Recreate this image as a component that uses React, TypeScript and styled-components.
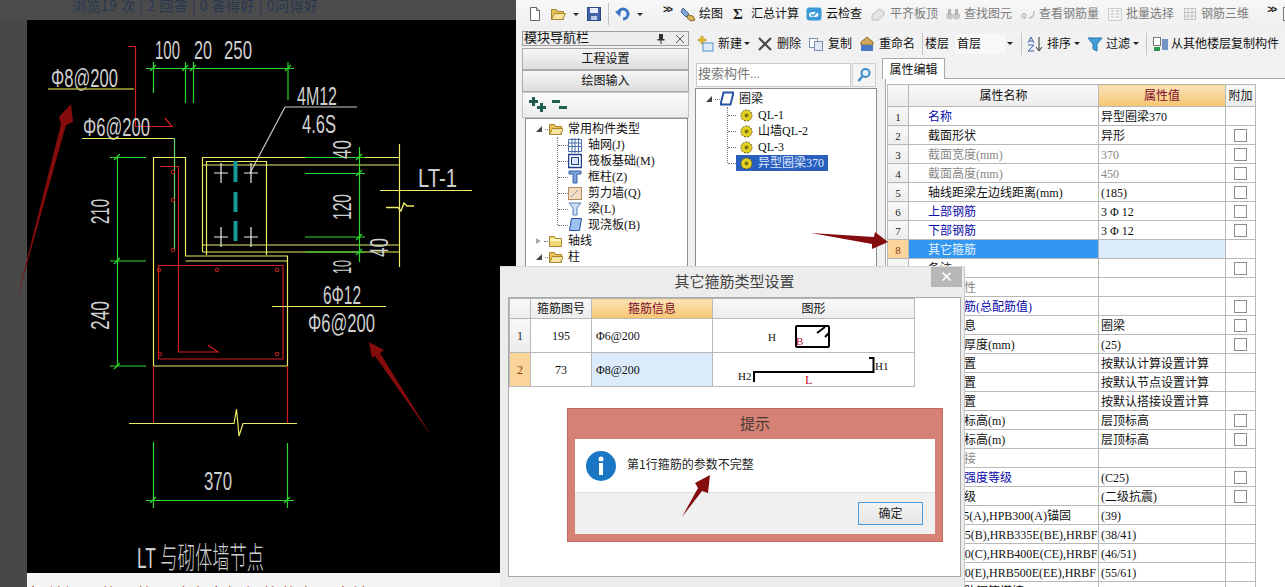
import React from "react";
import styled, { createGlobalStyle } from "styled-components";

const UI = `"Liberation Serif", "Noto Sans CJK SC", serif`;

const Global = createGlobalStyle`
  html, body { margin: 0; padding: 0; width: 1285px; height: 587px; overflow: hidden; background: #f1f1f1; }
  #root { width: 1285px; height: 587px; }
  * { box-sizing: border-box; }
`;

const Page = styled.div`
  position: relative; display: flex; width: 1285px; height: 587px; overflow: hidden;
  font: 12px/16px ${UI}; color: #111;
`;

/* left: web page with the CAD picture */
const WebColumn = styled.div`
  width: 516px; flex: none; padding-left: 27px; background: #484848;
  display: flex; flex-direction: column; overflow: hidden;
`;
const StatsStrip = styled.div`
  height: 20px; margin-left: -27px; padding: 0 0 0 72px; background: #4b4b4b; overflow: hidden;
  font: 14px/10px "Noto Sans CJK SC", sans-serif; letter-spacing: .5px; color: #26384f; white-space: nowrap;
`;
const Drawing = styled.svg`display: block; flex: none; background: #000;`;
const WhiteBand = styled.div`flex: 1; background: #f4f4f4; overflow: hidden; position: relative;`;
const Clipped = styled.div`
  margin: 12px 0 0 2px; font: 16px/16px "Noto Sans CJK SC", sans-serif; letter-spacing: 2px; color: #9c2a20; white-space: nowrap;
`;

/* right: application */
const AppColumn = styled.div`
  flex: 1; min-width: 0; background: #f1f1f1; display: flex; flex-direction: column;
`;
const TopBar = styled.div`
  height: 28px; flex: none; display: flex; align-items: center; white-space: nowrap; overflow: hidden;
  background: linear-gradient(#f7f7f7, #efefef);
`;
const Tool = styled.div<{ $ml?: number; $gap?: number; $dim?: boolean }>`
  display: flex; align-items: center; flex: none;
  margin-left: ${p => p.$ml ?? 8}px; gap: ${p => p.$gap ?? 3}px;
  color: ${p => (p.$dim ? "#7c7c7c" : "#111")};
`;
const Sep = styled.div<{ $ml?: number; $h?: number }>`
  width: 1px; height: ${p => p.$h ?? 22}px; flex: none; background: #c4c4c4; margin-left: ${p => p.$ml ?? 6}px;
`;
const Caret = styled.div<{ $ml?: number }>`
  flex: none; width: 0; height: 0; margin-left: ${p => p.$ml ?? 3}px;
  border-left: 3px solid transparent; border-right: 3px solid transparent; border-top: 3px solid #222;
`;
const More = styled.div<{ $ml?: number }>`
  flex: none; width: 9px; margin-left: ${p => p.$ml ?? 18}px; margin-top: -7px; font: bold 10px/10px "Liberation Mono", monospace; letter-spacing: -2px; color: #222;
`;
const Sigma = styled.div`
  width: 11px; font: bold 15px/16px "Liberation Serif", serif; color: #222;
`;
const EdgeBox = styled.div`
  width: 8px; height: 14px; margin-left: 7px; flex: none; background: #fff; border: 1px solid #777;
`;

const Body = styled.div`flex: 1; min-height: 0; display: flex; padding-left: 6px;`;

const NavColumn = styled.div`
  width: 167px; flex: none; padding-top: 3px; display: flex; flex-direction: column;
`;
const NavHeader = styled.div`
  height: 15px; flex: none; margin-bottom: 2px; padding: 0 0 2px 1px; display: flex; align-items: center; justify-content: space-between;
  border: 1px solid #9d9d9d; background: #ececec; font-size: 13px; line-height: 13px;
`;
const HeaderIcons = styled.div`display: flex; align-items: center; gap: 10px; padding-right: 3px; margin-top: 2px;`;
const NavButton = styled.div`
  height: 22px; flex: none; display: flex; align-items: center; justify-content: center;
  border: 1px solid #a8a8a8; background: linear-gradient(#f6f6f6, #dedede);
`;
const ExpandBar = styled.div`
  height: 26px; flex: none; padding-left: 6px; display: flex; align-items: center; gap: 4px;
  background: linear-gradient(#fafafa, #ececec); border: 1px solid #c4c4c4;
`;
const TreePanel = styled.div`
  flex: 1; min-height: 0; overflow: hidden; background: #fff; border: 1px solid #8d8d8d;
  padding-top: 2px;
`;
const NavTree = styled(TreePanel)`margin: 0 1px 0 3px; padding-left: 10px;`;
const Row = styled.div`height: 16px; display: flex; align-items: center; white-space: nowrap;`;
const Expander = styled.div<{ $open?: boolean }>`
  width: 6px; height: 6px; flex: none; margin-right: 3px;
  ${p => p.$open
    ? `border-style: solid; border-width: 0 0 6px 6px; border-color: transparent transparent #444 transparent; width:0; height:0;`
    : `border-style: solid; border-width: 3px 0 3px 5px; border-color: transparent transparent transparent #aaa; width:0; height:0;`}
`;
const NavChildren = styled.div`margin-left: 21px; border-left: 1px dotted #777; margin-bottom: 8px; height: 88px;`;
const Dash = styled.div<{ $w: number }>`width: ${p => p.$w}px; flex: none; border-top: 1px dotted #777;`;
const RowLabel = styled.span<{ $ml?: number }>`margin-left: ${p => p.$ml ?? 5}px;`;

const Main = styled.div`flex: 1; min-width: 0; margin-left: 6px; display: flex; flex-direction: column;`;
const SecondBar = styled.div`
  height: 30px; flex: none; padding-top: 1px; display: flex; align-items: center; white-space: nowrap;
`;
const FloorSelect = styled.div`
  width: 50px; height: 20px; margin-left: 6px; padding-left: 2px; flex: none; display: flex; align-items: center; background: #f8f8f8;
`;
const Panes = styled.div`flex: 1; min-height: 0; display: flex; gap: 5px;`;
const ComponentPane = styled.div`width: 182px; flex: none; padding-top: 5px; display: flex; flex-direction: column;`;
const SearchRow = styled.div`height: 25px; flex: none; display: flex; gap: 1px; padding: 0 0 1px 1px;`;
const SearchInput = styled.div`
  width: 155px; background: #fff; border: 1px solid #c9c9c9; padding: 0 0 3px 1px; display: flex; align-items: center; color: #777; font-size: 13px;
`;
const SearchButton = styled.div`
  width: 24px; border: 1px solid #d0d0d0; background: #f4f4f4; display: flex; align-items: center; justify-content: center;
`;
const ComponentTree = styled(TreePanel)`padding-left: 10px;`;
const CompChildren = styled.div`margin-left: 21px; height: 56px; border-left: 1px dotted #777;`;
const SelectBox = styled.div<{ $on?: boolean }>`
  display: flex; align-items: center; gap: 5px; padding: 0 4px; height: 16px;
  background: ${p => (p.$on ? "#2b5fbd" : "transparent")}; color: ${p => (p.$on ? "#dfe8ff" : "#111")};
`;

const PropPane = styled.div`flex: 1; min-width: 0; display: flex; flex-direction: column; margin-right: 0;`;
const TabStrip = styled.div`height: 21px; flex: none; border-bottom: 1px solid #a9a9a9;`;
const Tab = styled.div`
  width: 63px; height: 21px; padding-top: 2px; background: #fff; border: 1px solid #a9a9a9; border-bottom: none;
  display: flex; align-items: center; justify-content: center;
`;
const PropBody = styled.div`
  flex: 1; min-height: 0; overflow: hidden; background: #fff; margin-left: 3px; border-left: 1px solid #a9a9a9; padding: 5px 0 0 1px;
`;
const PropTable = styled.table`
  border-collapse: collapse; table-layout: fixed; width: 369px; background: #fff;
`;
const Head = styled.th<{ $active?: boolean }>`
  height: 22px; padding: 0; font-weight: normal; text-align: center; border: 1px solid #b8b8b8;
  background: ${p => (p.$active ? "linear-gradient(#fbe3b8, #f6c670)" : "linear-gradient(#f9f9f9, #ececec)")};
  color: ${p => (p.$active ? "#7d0a2c" : "#111")};
`;
const NumCell = styled.td<{ $active?: boolean }>`
  height: 19px; padding: 1px 0 0; line-height: 16px; text-align: center; border: 1px solid #b8b8b8; font-size: 11px;
  background: ${p => (p.$active ? "#fbd49a" : "linear-gradient(#f8f8f8, #ececec)")};
  color: ${p => (p.$active ? "#8a3a10" : "#222")};
`;
const toneColor = { blue: "#0a0aa8", grey: "#8a8a8a", black: "#111" };
const NameCell = styled.td<{ $tone: "blue" | "grey" | "black"; $sel?: boolean }>`
  height: 19px; padding: 1px 0 0 19px; line-height: 16px; border: 1px solid #b8b8b8; white-space: nowrap; overflow: hidden;
  color: ${p => (p.$sel ? "#e8f3ff" : toneColor[p.$tone])};
  background: ${p => (p.$sel ? "#3397f2" : "#fff")};
`;
const ValueCell = styled.td<{ $sel?: boolean; $grey?: boolean }>`
  height: 19px; padding: 1px 0 0 2px; line-height: 16px; border: 1px solid #b8b8b8; white-space: nowrap; overflow: hidden;
  background: ${p => (p.$sel ? "#dcebfb" : "#fff")}; color: ${p => (p.$grey ? "#8a8a8a" : "#111")};
`;
const ExtraCell = styled.td`height: 19px; padding: 0; border: 1px solid #b8b8b8; text-align: center; line-height: 0;`;
const CheckBox = styled.span`display: inline-block; width: 13px; height: 13px; background: #fff; border: 1px solid #8c8c8c;`;

/* dialogs */
const Dialog = styled.div`
  position: absolute; left: 500px; top: 266px; width: 465px; height: 321px;
  background: #ececec; border-top: 1px solid #d8d8d8; border-right: 1px solid #c8c8c8; padding: 0 3px 0 8px;
  display: flex; flex-direction: column;
`;
const DialogTitle = styled.div`
  height: 30px; flex: none; padding-bottom: 2px; display: flex; align-items: center; justify-content: center;
  font: 15px/20px "Noto Sans CJK SC", sans-serif; color: #444;
`;
const CloseButton = styled.div`
  position: absolute; right: 2px; top: 0; width: 31px; height: 20px; background: #b7b7b7; color: #fff;
  display: flex; align-items: center; justify-content: center; font: bold 15px/16px "DejaVu Sans", sans-serif;
`;
const DialogBody = styled.div`
  height: 280px; flex: none; background: #fff; border: 1px solid #a9a9a9; padding: 0;
`;
const StirrupTable = styled.table`border-collapse: collapse; table-layout: fixed; width: 405px;`;
const StHead = styled.th<{ $active?: boolean }>`
  height: 20px; padding: 0; line-height: 14px; font-weight: normal; text-align: center; border: 1px solid #b8b8b8;
  background: ${p => (p.$active ? "linear-gradient(#fbe3b8, #f6c670)" : "linear-gradient(#f9f9f9, #ececec)")};
  color: ${p => (p.$active ? "#7d0a2c" : "#111")};
`;
const StNum = styled(NumCell)`font-size: 12px; height: 33px;`;
const StCell = styled.td<{ $sel?: boolean }>`
  padding: 0; height: 33px; border: 1px solid #b8b8b8; text-align: center;
  background: ${p => (p.$sel ? "#dcebfb" : "#fff")};
`;
const StInfo = styled(StCell)`text-align: left; padding-left: 4px;`;
const ShapeSvg = styled.svg`display: block;`;

const Prompt = styled.div`
  position: absolute; left: 567px; top: 408px; width: 376px; height: 134px; background: #d58174;
  border: 1px solid #c5675a; padding: 0 7px 7px 7px; display: flex; flex-direction: column;
`;
const PromptTitle = styled.div`
  height: 30px; flex: none; padding-bottom: 2px; display: flex; align-items: center; justify-content: center;
  font: 15px/20px "Noto Sans CJK SC", sans-serif; color: #4a3a38;
`;
const PromptMain = styled.div`
  height: 53px; flex: none; background: #fff; display: flex; align-items: center; padding: 0 0 0 11px; gap: 11px;
  font: 12px/16px "Noto Sans CJK SC", sans-serif; color: #222;
`;
const PromptText = styled.span`margin-bottom: 4px;`;
const PromptFoot = styled.div`
  flex: 1; background: #f0f0f0; border-top: 1px solid #dedede; display: flex; align-items: center; justify-content: flex-end; padding: 0 12px 0 0;
`;
const OkButton = styled.div`
  width: 65px; height: 23px; padding-bottom: 1px; border: 1px solid #4a9bdc; background: linear-gradient(#f3f3f3, #e6e6e6);
  display: flex; align-items: center; justify-content: center; font: 12px/16px "Noto Sans CJK SC", sans-serif; color: #222;
`;
const ArrowLayer = styled.svg`position: absolute; left: 0; top: 0; pointer-events: none;`;

/* ---------- icons ---------- */
const Ico = ({ w = 16, h = 16, children }: { w?: number; h?: number; children: React.ReactNode }) => (
  <svg width={w} height={h} viewBox={`0 0 ${w} ${h}`} style={{ flex: "none", display: "block" }}>{children}</svg>
);
const NewDoc = () => <Ico><path d="M3.5 1.5h6l3 3v10h-9z" fill="#fff" stroke="#666" /><path d="M9.5 1.5v3h3" fill="#ddd" stroke="#666" /></Ico>;
const FolderOpen = ({ w = 16 }: { w?: number }) => (
  <Ico w={w}><path d="M1.5 3.5h5l1 2h6v8h-12z" fill="#e6c45a" stroke="#a8842a" /><path d="M1.5 13.5l3-6h11l-3 6z" fill="#f7e3a0" stroke="#a8842a" /></Ico>
);
const FolderClosed = () => <Ico w={15}><path d="M1.5 3.5h5l1 2h6v8h-12z" fill="#f2d877" stroke="#a8842a" /><rect x="2" y="6" width="11" height="2" fill="#fff6c8" /></Ico>;
const SaveIcon = () => <Ico><rect x="1.5" y="1.5" width="13" height="13" fill="#4263a8" stroke="#2c4783" /><rect x="4" y="2" width="8" height="5" fill="#e9eef8" /><rect x="5" y="10" width="6" height="4" fill="#b9c7e3" /></Ico>;
const UndoIcon = () => <Ico><path d="M3 8a5 5 0 1 1 5 5" fill="none" stroke="#3a74c4" strokeWidth="3" /><path d="M0 5l6 0-1 6z" fill="#3a74c4" /></Ico>;
const DrawIcon = () => <Ico><path d="M3 2l6 6-3 3-5-5z" fill="#7ea6d6" stroke="#3c5f93" /><path d="M8 9l5 1 2 4-4 1-4-3z" fill="#d8b45c" stroke="#8a6d2a" /></Ico>;
const CloudIcon = () => <Ico><rect x="0.5" y="1.5" width="15" height="13" rx="3" fill="#3a9ad9" /><path d="M3 9c0-3 3-3 4-3 2 0 3 0 5 1 1 2 0 4-2 4H5c-1 0-2-1-2-2z" fill="#fff" /><path d="M5 8l2 2 4-4" fill="none" stroke="#3a9ad9" strokeWidth="1.5" /></Ico>;
const FlatIcon = () => <Ico><path d="M2 9l7-6 5 3v3L8 14H2z" fill="#e4e4e4" stroke="#bdbdbd" /></Ico>;
const BinocIcon = () => <Ico><circle cx="4.5" cy="10" r="3.5" fill="#c8c8c8" /><circle cx="11.5" cy="10" r="3.5" fill="#c8c8c8" /><rect x="3" y="3" width="3" height="6" fill="#b5b5b5" /><rect x="10" y="3" width="3" height="6" fill="#b5b5b5" /></Ico>;
const GlassIcon = () => <Ico><path d="M2 11c0-4 3-4 4-2l-1 3zM14 5c0 5-2 7-5 7" fill="none" stroke="#bdbdbd" strokeWidth="1.5" /></Ico>;
const BatchIcon = () => <Ico><path d="M1.5 2.5h13v12h-13z" fill="#f4f4f4" stroke="#cfcfcf" /><path d="M4 5h3M4 8h3M4 11h3M9 5h3M9 8h3M9 11h3" stroke="#bbb" /></Ico>;
const Rebar3d = () => <Ico><path d="M2.5 2.5h11v11h-11zM6 2.5v11M10 2.5v11M2.5 6.5h11M2.5 10h11" fill="none" stroke="#c4c4c4" /></Ico>;
const AddIcon = () => <Ico><path d="M5 0v3h3v2H5v3H3V5H0V3h3V0z" fill="#e8c020" stroke="#9c8420" strokeWidth=".5" /><rect x="5" y="7" width="10" height="8" fill="#dceafa" stroke="#5d8ccb" /></Ico>;
const DeleteIcon = () => <Ico><path d="M2 2l12 12M14 2L2 14" stroke="#444" strokeWidth="2" /></Ico>;
const CopyIcon = () => <Ico><rect x="1.5" y="2.5" width="8" height="9" fill="#fff" stroke="#7c90ad" /><rect x="6.5" y="5.5" width="8" height="9" fill="#dfe9f6" stroke="#7c90ad" /></Ico>;
const RenameIcon = () => <Ico><path d="M2 6l6-5 6 5v3H2z" fill="#cda75a" stroke="#8c6e2c" /><rect x="2" y="9" width="12" height="6" fill="#4c79c4" /></Ico>;
const SortIcon = () => (
  <Ico><path d="M1 7l3-6 3 6M2 5h4" fill="none" stroke="#3a63b4" /><path d="M1 9h6l-6 6h6" fill="none" stroke="#3a63b4" /><path d="M12 1v13M9 11l3 4 3-4" fill="none" stroke="#333" /></Ico>
);
const FilterIcon = () => <Ico><path d="M1 2h14L10 8v7l-4-2V8z" fill="#3f9fd9" stroke="#2a76ad" /></Ico>;
const CopyFloor = () => <Ico><rect x="1.5" y="1.5" width="7" height="8" fill="#fff" stroke="#777" /><path d="M2 11h6v4H2z" fill="#2f9a4f" /><path d="M11 3v11M13 3v11M15 3v11" stroke="#3d6fb5" strokeWidth="1.4" /></Ico>;
const PlusTree = () => <Ico w={18} h={16}><path d="M3 0h3v3h3v3H6v3H3V6H0V3h3zM11 6h3v3h3v3h-3v3h-3v-3H8V9h3z" fill="#1f5f50" /></Ico>;
const MinusTree = () => <Ico w={18} h={16}><path d="M1 3h8v3H1zM8 9h8v3H8z" fill="#1f5f50" /></Ico>;
const PinIcon = () => <Ico w={8} h={11}><path d="M2 1h4v5h1.5v1.5H4.5V11h-1V7.5H.5V6H2z" fill="#333" /></Ico>;
const CloseSmall = () => <Ico w={10} h={10}><path d="M1 1l8 8M9 1L1 9" stroke="#555" /></Ico>;
const GridIcon = () => <Ico w={14}><path d="M.5 2.5h13v12H.5zM4 1v15M7 1v15M10.500 1v15M.5 6h13M.5 9.500h13" fill="none" stroke="#4a6cae" /></Ico>;
const RaftIcon = () => <Ico w={14}><rect x=".5" y="1.500" width="13" height="13" fill="none" stroke="#1f3f8a" strokeWidth="1.500" /><rect x="3.500" y="4.500" width="7" height="7" fill="#dbe5f8" stroke="#1f3f8a" /></Ico>;
const ColumnIcon = () => <Ico w={14}><path d="M1 2h12v3H9v9H5V5H1z" fill="#7ca3dd" stroke="#3960a5" /></Ico>;
const WallIcon = () => <Ico w={14}><rect x=".5" y="2.500" width="13" height="12" fill="#f2dcc4" stroke="#b58a5c" /><path d="M3 12l7-7" stroke="#9b9b9b" /></Ico>;
const BeamIcon = () => <Ico w={14}><path d="M1 2h12L9 7v7H5V7z" fill="#cfe0f3" stroke="#4f7fb8" /></Ico>;
const SlabIcon = () => <Ico w={14}><path d="M3.500 1.500h10l-2 12H1.500z" fill="#9ec0ef" stroke="#2753a3" /></Ico>;
const RingBeamIcon = () => <Ico w={14}><path d="M3.500 1.500h10l-3 12H.5z" fill="#fff" stroke="#2753a3" strokeWidth="2" /></Ico>;
const SunIcon = () => <Ico w={13} h={13}><circle cx="6.500" cy="6.500" r="5.500" fill="#e6d227" stroke="#5e5a12" strokeDasharray="2 1" /><circle cx="6.500" cy="6.500" r="2" fill="#7c7616" /></Ico>;
const SearchGlass = () => <Ico><circle cx="9.500" cy="6" r="4" fill="#e6f2fb" stroke="#3d8cc6" strokeWidth="2" /><path d="M6.500 9l-4 5" stroke="#3d8cc6" strokeWidth="2.400" /></Ico>;
const InfoIcon = () => (
  <Ico w={30} h={30}>
    <circle cx="15" cy="15" r="15" fill="#1b76c4" />
    <circle cx="15" cy="8" r="2.500" fill="#fff" />
    <rect x="13" y="12" width="4" height="12" fill="#fff" />
  </Ico>
);

/* ---------- CAD drawing (page coordinates) ---------- */
const G = "#2cd82c", Y = "#ecec66", R = "#d01e1e", W = "#cfcfcf";
const CadText = ({ x, y, w, s = 26, children, rot, fill = W }: { x: number; y: number; w: number; s?: number; children: string; rot?: number; fill?: string }) => (
  <text
    x={x} y={y} textLength={w} lengthAdjust="spacingAndGlyphs" fontSize={s}
    fontFamily={`"Liberation Sans","Noto Sans CJK SC",sans-serif`} fill={fill} fontWeight={300}
    transform={rot ? `rotate(${rot} ${x} ${y})` : undefined}
  >{children}</text>
);
const L = ({ d, c, w = 1.2 }: { d: string; c: string; w?: number }) => <path d={d} fill="none" stroke={c} strokeWidth={w} />;
const Tick = ({ x, y }: { x: number; y: number }) => <L d={`M${x - 3} ${y + 3}L${x + 3} ${y - 3}`} c={G} />;
const Bolt = ({ x, y }: { x: number; y: number }) => <L d={`M${x - 7} ${y}H${x + 7}M${x} ${y - 10}V${y + 10}`} c="#eee" />;
const Dot = ({ x, y }: { x: number; y: number }) => <circle cx={x} cy={y} r={1.8} fill="none" stroke={R} />;

const CadDrawing = () => (
  <Drawing width={489} height={553} viewBox="27 20 489 553">
    <L d="M146 68.500H294M153.500 62V93M185.500 62V103M193.500 62V103M288 62V100" c={G} />
    <Tick x={153} y={68} /><Tick x={185} y={68} /><Tick x={193} y={68} /><Tick x={288} y={68} />
    <CadText x={155} y={59} w={25}>100</CadText>
    <CadText x={194} y={59} w={18}>20</CadText>
    <CadText x={224} y={59} w={28}>250</CadText>
    <L d="M128 46.500H135.500V126.500H172L165 118" c={R} />
    <CadText x={51} y={87} w={67}>Φ8@200</CadText>
    <L d="M48 89H134" c="#a8a83a" w={1.500} />
    <CadText x={83} y={136} w={67}>Φ6@200</CadText>
    <L d="M82 138.500H174.500" c={Y} />
    <L d="M174.500 138.500V250" c="#5fdc5f" />
    <CadText x={297} y={105} w={40}>4M12</CadText>
    <L d="M357 107H285L250 173" c="#ccc" />
    <CadText x={302} y={133} w={34}>4.6S</CadText>

    <L d="M153.500 366V157.500H185.500V256H287.500V366H153.500M185.500 261H287.500" c={Y} />
    <L d="M160 166.500H178.500V352H218L208 345" c={R} />
    <L d="M158.500 359V265.500H283V359H158.500" c={R} />
    <Dot x={159} y={270} /><Dot x={217} y={270} /><Dot x={277} y={270} /><Dot x={160} y={354} /><Dot x={277} y={354} />
    <Dot x={173} y={172} /><Dot x={173} y={200} /><Dot x={173} y={250} />

    <L d="M202.500 252V157.500H399.500M202.500 165H399.500M202.500 245H399.500M202.500 252H399.500M206.500 255V161.500H266.500V255M399.500 144V267" c={Y} />
    <Bolt x={221} y={173} /><Bolt x={251} y={173} /><Bolt x={221} y={237} /><Bolt x={251} y={237} />
    <rect x={233.500} y={161} width={4} height={21} fill="#159a9a" />
    <rect x={233.500} y={192} width={4} height={20} fill="#159a9a" />
    <rect x={233.500} y={221} width={4} height={20} fill="#159a9a" />
    <L d="M359.500 147V262M305 157.500H365M305 173.500H365M305 237H365M305 252H365" c={G} />
    <Tick x={359} y={157} /><Tick x={359} y={173} /><Tick x={359} y={237} /><Tick x={359} y={252} />
    <CadText x={351} y={159} w={19} rot={-90}>40</CadText>
    <CadText x={351} y={220} w={26} rot={-90}>120</CadText>
    <CadText x={388} y={257} w={19} rot={-90}>40</CadText>
    <CadText x={351} y={274} w={14} rot={-90}>10</CadText>
    <CadText x={418} y={187} w={39}>LT-1</CadText>
    <L d="M380 190.500H472" c={Y} />
    <L d="M386 207.500H398L401 211L404 203L407 206H414" c={Y} w={1.400} />

    <L d="M117.500 156V366M110 157.500H146M110 261H146M110 366H146" c={G} />
    <Tick x={117} y={157} /><Tick x={117} y={261} /><Tick x={117} y={366} />
    <CadText x={109} y={224} w={25} rot={-90}>210</CadText>
    <CadText x={109} y={330} w={29} rot={-90}>240</CadText>
    <CadText x={323} y={304} w={38}>6Φ12</CadText>
    <L d="M272 306.500H386" c={Y} />
    <CadText x={308} y={332} w={67}>Φ6@200</CadText>

    <L d="M153.500 366V423M287.500 366V423" c={R} />
    <L d="M129 423.500H234L236.500 409L239 436L243 423.500H297" c={Y} />
    <L d="M153.500 442V508M287.500 443V508M146 500.500H294" c={G} />
    <Tick x={153} y={500} /><Tick x={287} y={500} />
    <CadText x={204} y={490} w={28}>370</CadText>
    <CadText x={137} y={568} w={127} s={30}>LT 与砌体墙节点</CadText>
  </Drawing>
);

/* ---------- data ---------- */
type PropRow = { name: string; value?: string; tone?: "blue" | "grey" | "black"; check?: boolean; grey?: boolean; sel?: boolean };
const rows: PropRow[] = [
  { name: "名称", value: "异型圈梁370", tone: "blue" },
  { name: "截面形状", value: "异形", check: true },
  { name: "截面宽度(mm)", value: "370", tone: "grey", grey: true, check: true },
  { name: "截面高度(mm)", value: "450", tone: "grey", grey: true, check: true },
  { name: "轴线距梁左边线距离(mm)", value: "(185)", check: true },
  { name: "上部钢筋", value: "3 Φ 12", tone: "blue", check: true },
  { name: "下部钢筋", value: "3 Φ 12", tone: "blue", check: true },
  { name: "其它箍筋", sel: true },
  { name: "备注", check: true },
  { name: "其它属性", tone: "grey" },
  { name: "侧面纵筋(总配筋值)", tone: "blue", check: true },
  { name: "汇总信息", value: "圈梁", check: true },
  { name: "保护层厚度(mm)", value: "(25)", check: true },
  { name: "计算设置", value: "按默认计算设置计算" },
  { name: "节点设置", value: "按默认节点设置计算" },
  { name: "搭接设置", value: "按默认搭接设置计算" },
  { name: "起点顶标高(m)", value: "层顶标高", check: true },
  { name: "终点顶标高(m)", value: "层顶标高", check: true },
  { name: "锚固搭接", tone: "grey" },
  { name: "混凝土强度等级", value: "(C25)", tone: "blue", check: true },
  { name: "抗震等级", value: "(二级抗震)", check: true },
  { name: "HPB235(A),HPB300(A)锚固", value: "(39)" },
  { name: "HRB335(B),HRB335E(BE),HRBF", value: "(38/41)" },
  { name: "HRB400(C),HRB400E(CE),HRBF", value: "(46/51)" },
  { name: "HRB500(E),HRB500E(EE),HRBF", value: "(55/61)" },
  { name: "冷轧带肋钢筋搭接", value: "(47)" },
];

const navChildren: [React.ReactNode, string][] = [
  [<GridIcon />, "轴网(J)"],
  [<RaftIcon />, "筏板基础(M)"],
  [<ColumnIcon />, "框柱(Z)"],
  [<WallIcon />, "剪力墙(Q)"],
  [<BeamIcon />, "梁(L)"],
  [<SlabIcon />, "现浇板(B)"],
];

export default function App() {
  return (
    <Page>
      <Global />
      <WebColumn>
        <StatsStrip>浏览19 次 | 2 回答 | 0 答得好 | 0问得好</StatsStrip>
        <CadDrawing />
        <WhiteBand><Clipped>相关问题的回答，请参考梁钢筋的布置方法</Clipped></WhiteBand>
      </WebColumn>

      <AppColumn>
        <TopBar>
          <Tool $ml={11}><NewDoc /></Tool>
          <Tool $ml={7}><FolderOpen /></Tool>
          <Caret $ml={7} />
          <Tool $ml={7}><SaveIcon /></Tool>
          <Sep />
          <Tool $ml={6}><UndoIcon /></Tool>
          <Caret $ml={6} />
          <More $ml={20}>&gt;&gt;</More>
          <Tool><DrawIcon />绘图</Tool>
          <Tool $ml={10} $gap={7}><Sigma>Σ</Sigma>汇总计算</Tool>
          <Tool $ml={7} $gap={4}><CloudIcon />云检查</Tool>
          <Tool $dim $gap={4}><FlatIcon />平齐板顶</Tool>
          <Tool $dim $ml={7}><BinocIcon />查找图元</Tool>
          <Tool $dim><GlassIcon />查看钢筋量</Tool>
          <Tool $dim><BatchIcon />批量选择</Tool>
          <Tool $dim><Rebar3d />钢筋三维</Tool>
          <More>&gt;&gt;</More>
          <EdgeBox />
        </TopBar>

        <Body>
          <NavColumn>
            <NavHeader>
              模块导航栏
              <HeaderIcons><PinIcon /><CloseSmall /></HeaderIcons>
            </NavHeader>
            <NavButton>工程设置</NavButton>
            <NavButton>绘图输入</NavButton>
            <ExpandBar><PlusTree /><MinusTree /></ExpandBar>
            <NavTree>
              <Row><Expander $open /><Dash $w={3} /><FolderOpen w={15} /><RowLabel>常用构件类型</RowLabel></Row>
              <NavChildren>
                {navChildren.map(([icon, label]) => (
                  <Row key={label}><Dash $w={10} />{icon}<RowLabel $ml={6}>{label}</RowLabel></Row>
                ))}
              </NavChildren>
              <Row><Expander /><Dash $w={4} /><FolderClosed /><RowLabel>轴线</RowLabel></Row>
              <Row><Expander $open /><Dash $w={3} /><FolderOpen w={15} /><RowLabel>柱</RowLabel></Row>
            </NavTree>
          </NavColumn>

          <Main>
            <SecondBar>
              <Tool $ml={3} $gap={4}><AddIcon />新建</Tool>
              <Caret $ml={2} />
              <Tool $ml={7} $gap={4}><DeleteIcon />删除</Tool>
              <Tool $ml={7} $gap={4}><CopyIcon />复制</Tool>
              <Tool $ml={7} $gap={4}><RenameIcon />重命名</Tool>
              <Sep $ml={7} />
              <Tool $ml={2}>楼层</Tool>
              <FloorSelect>首层</FloorSelect>
              <Caret $ml={2} />
              <Sep $ml={8} />
              <Tool $ml={5} $gap={4}><SortIcon />排序</Tool>
              <Caret />
              <Tool $ml={7}><FilterIcon />过滤</Tool>
              <Caret />
              <Sep $ml={7} />
              <Tool $ml={5}><CopyFloor />从其他楼层复制构件</Tool>
            </SecondBar>

            <Panes>
              <ComponentPane>
                <SearchRow>
                  <SearchInput>搜索构件...</SearchInput>
                  <SearchButton><SearchGlass /></SearchButton>
                </SearchRow>
                <ComponentTree>
                  <Row><Expander $open /><Dash $w={5} /><RingBeamIcon /><RowLabel>圈梁</RowLabel></Row>
                  <CompChildren>
                    <Row><Dash $w={8} /><SelectBox><SunIcon />QL-1</SelectBox></Row>
                    <Row><Dash $w={8} /><SelectBox><SunIcon />山墙QL-2</SelectBox></Row>
                    <Row><Dash $w={8} /><SelectBox><SunIcon />QL-3</SelectBox></Row>
                    <Row><Dash $w={8} /><SelectBox $on><SunIcon />异型圈梁370</SelectBox></Row>
                  </CompChildren>
                </ComponentTree>
              </ComponentPane>

              <PropPane>
                <TabStrip><Tab>属性编辑</Tab></TabStrip>
                <PropBody>
                  <PropTable>
                    <colgroup>
                      <col width={21} /><col width={190} /><col width={127} /><col width={30} />
                    </colgroup>
                    <thead>
                      <tr><Head /><Head>属性名称</Head><Head $active>属性值</Head><Head>附加</Head></tr>
                    </thead>
                    <tbody>
                      {rows.map((r, i) => (
                        <tr key={r.name}>
                          <NumCell $active={r.sel}>{i + 1}</NumCell>
                          <NameCell $tone={r.tone ?? "black"} $sel={r.sel}>{r.name}</NameCell>
                          <ValueCell $sel={r.sel} $grey={r.grey}>{r.value}</ValueCell>
                          <ExtraCell>{r.check && <CheckBox />}</ExtraCell>
                        </tr>
                      ))}
                    </tbody>
                  </PropTable>
                </PropBody>
              </PropPane>
            </Panes>
          </Main>
        </Body>
      </AppColumn>

      <Dialog>
        <DialogTitle>其它箍筋类型设置</DialogTitle>
        <CloseButton>✕</CloseButton>
        <DialogBody>
          <StirrupTable>
            <colgroup><col width={21} /><col width={61} /><col width={121} /><col width={202} /></colgroup>
            <thead>
              <tr><StHead /><StHead>箍筋图号</StHead><StHead $active>箍筋信息</StHead><StHead>图形</StHead></tr>
            </thead>
            <tbody>
              <tr>
                <StNum>1</StNum>
                <StCell>195</StCell>
                <StInfo>Φ6@200</StInfo>
                <StCell>
                  <ShapeSvg width={201} height={33} viewBox="0 0 201 33">
                    <text x={55} y={22} fontSize={11} fontFamily="Liberation Serif, serif" fill="#111">H</text>
                    <rect x={83} y={7} width={33} height={21} fill="none" stroke="#000" strokeWidth={2} rx={1} />
                    <path d="M104 14l8-6M112 18l4-4" stroke="#000" strokeWidth={2} />
                    <text x={83} y={26} fontSize={11} fontFamily="Liberation Serif, serif" fill="#c01030">B</text>
                  </ShapeSvg>
                </StCell>
              </tr>
              <tr>
                <StNum $active>2</StNum>
                <StCell>73</StCell>
                <StInfo $sel>Φ8@200</StInfo>
                <StCell>
                  <ShapeSvg width={201} height={33} viewBox="0 0 201 33">
                    <text x={25} y={27} fontSize={11} fontFamily="Liberation Serif, serif" fill="#111">H2</text>
                    <path d="M41 29V19H160.500V5H156" fill="none" stroke="#000" strokeWidth={2} />
                    <text x={92} y={31} fontSize={12} fontFamily="Liberation Serif, serif" fill="#c01030">L</text>
                    <text x={162} y={17} fontSize={11} fontFamily="Liberation Serif, serif" fill="#111">H1</text>
                  </ShapeSvg>
                </StCell>
              </tr>
            </tbody>
          </StirrupTable>
        </DialogBody>
      </Dialog>

      <Prompt>
        <PromptTitle>提示</PromptTitle>
        <PromptMain><InfoIcon /><PromptText>第1行箍筋的参数不完整</PromptText></PromptMain>
        <PromptFoot><OkButton>确定</OkButton></PromptFoot>
      </Prompt>

      <ArrowLayer width={1285} height={587} viewBox="0 0 1285 587">
        <g fill="#840c0c">
          <polygon points="71,104 73,122 66,125 16,303 61,124 59,117" />
          <polygon points="369,342 384,350 380,353 432,437 375,356 372,358" />
          <polygon points="888,242 872,249 872,244 811,233 874,237 875,232" />
          <polygon points="710,475 708,493 702,491 682,517 698,488 695,483" />
        </g>
      </ArrowLayer>
    </Page>
  );
}
